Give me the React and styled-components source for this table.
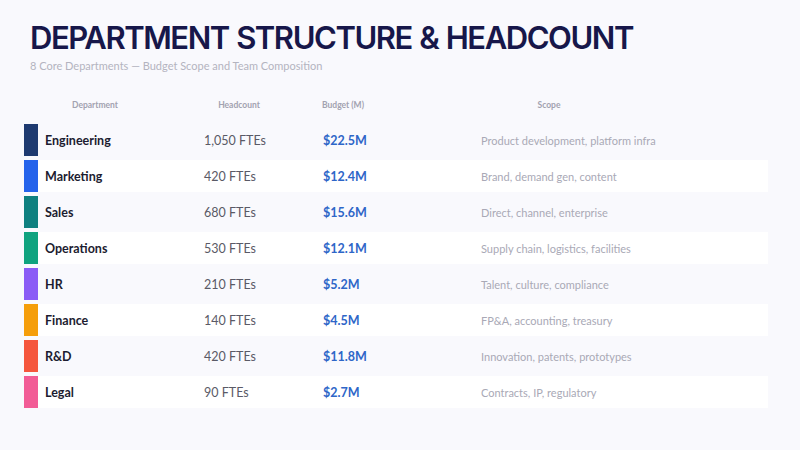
import React from "react";
import styled, { createGlobalStyle } from "styled-components";

const Global = createGlobalStyle`
  html, body { margin: 0; padding: 0; background: #f9f9fd; }
  body { width: 800px; height: 450px; overflow: hidden; }
  * { box-sizing: border-box; }
`;

const Page = styled.div`
  width: 800px;
  height: 450px;
  background: #f9f9fd;
  padding: 19px 32px 0 24px;
  font-family: Lato, "Open Sans", sans-serif;
`;

const Title = styled.h1`
  margin: 0 0 0 6px;
  font-family: Inter, sans-serif;
  font-weight: 600;
  font-size: 31px;
  line-height: 38px;
  letter-spacing: -1.45px;
  word-spacing: 1px;
  color: #17174a;
`;

const Subtitle = styled.div`
  margin: 2px 0 0 6px;
  font-family: Lato, sans-serif;
  font-size: 11px;
  line-height: 14px;
  color: #b4b4c0;
`;

const HeaderRow = styled.div`
  display: grid;
  grid-template-columns: 142px 146px 62px 350px;
  margin-top: 22px;
  height: 20px;
  align-items: center;
`;

const HeaderCell = styled.div`
  text-align: center;
  font-size: 8.5px;
  font-weight: 700;
  color: #a2a2b0;
`;

const Rows = styled.div`
  display: flex;
  flex-direction: column;
  gap: 4px;
  margin-top: 9px;
`;

const Row = styled.div`
  display: grid;
  grid-template-columns: 14px 166px 119px 158px 1fr;
  height: 32px;
  align-items: center;
  background: ${(p) => (p.$alt ? "#ffffff" : "transparent")};
`;

const Bar = styled.div`
  align-self: stretch;
  background: ${(p) => p.$color};
`;

const Name = styled.div`
  padding-left: 7px;
  font-weight: 700;
  font-size: 12.5px;
  color: #1c1c30;
`;

const Count = styled.div`
  font-size: 12.5px;
  color: #5a5a66;
`;

const Budget = styled.div`
  font-weight: 700;
  font-size: 12.5px;
  color: #2e66c8;
`;

const Scope = styled.div`
  font-size: 11px;
  color: #a9a9b6;
`;

const data = [
  ["Engineering", "1,050 FTEs", "$22.5M", "Product development, platform infra", "#1e3a70"],
  ["Marketing", "420 FTEs", "$12.4M", "Brand, demand gen, content", "#2563eb"],
  ["Sales", "680 FTEs", "$15.6M", "Direct, channel, enterprise", "#0f8080"],
  ["Operations", "530 FTEs", "$12.1M", "Supply chain, logistics, facilities", "#10a37f"],
  ["HR", "210 FTEs", "$5.2M", "Talent, culture, compliance", "#8b5cf6"],
  ["Finance", "140 FTEs", "$4.5M", "FP&A, accounting, treasury", "#f59e0b"],
  ["R&D", "420 FTEs", "$11.8M", "Innovation, patents, prototypes", "#f5563d"],
  ["Legal", "90 FTEs", "$2.7M", "Contracts, IP, regulatory", "#f25c96"],
];

export default function App() {
  return (
    <Page>
      <Global />
      <Title>DEPARTMENT STRUCTURE &amp; HEADCOUNT</Title>
      <Subtitle>8 Core Departments — Budget Scope and Team Composition</Subtitle>
      <HeaderRow>
        <HeaderCell>Department</HeaderCell>
        <HeaderCell>Headcount</HeaderCell>
        <HeaderCell>Budget (M)</HeaderCell>
        <HeaderCell>Scope</HeaderCell>
      </HeaderRow>
      <Rows>
        {data.map(([name, count, budget, scope, color], i) => (
          <Row key={name} $alt={i % 2 === 1}>
            <Bar $color={color} />
            <Name>{name}</Name>
            <Count>{count}</Count>
            <Budget>{budget}</Budget>
            <Scope>{scope}</Scope>
          </Row>
        ))}
      </Rows>
    </Page>
  );
}
